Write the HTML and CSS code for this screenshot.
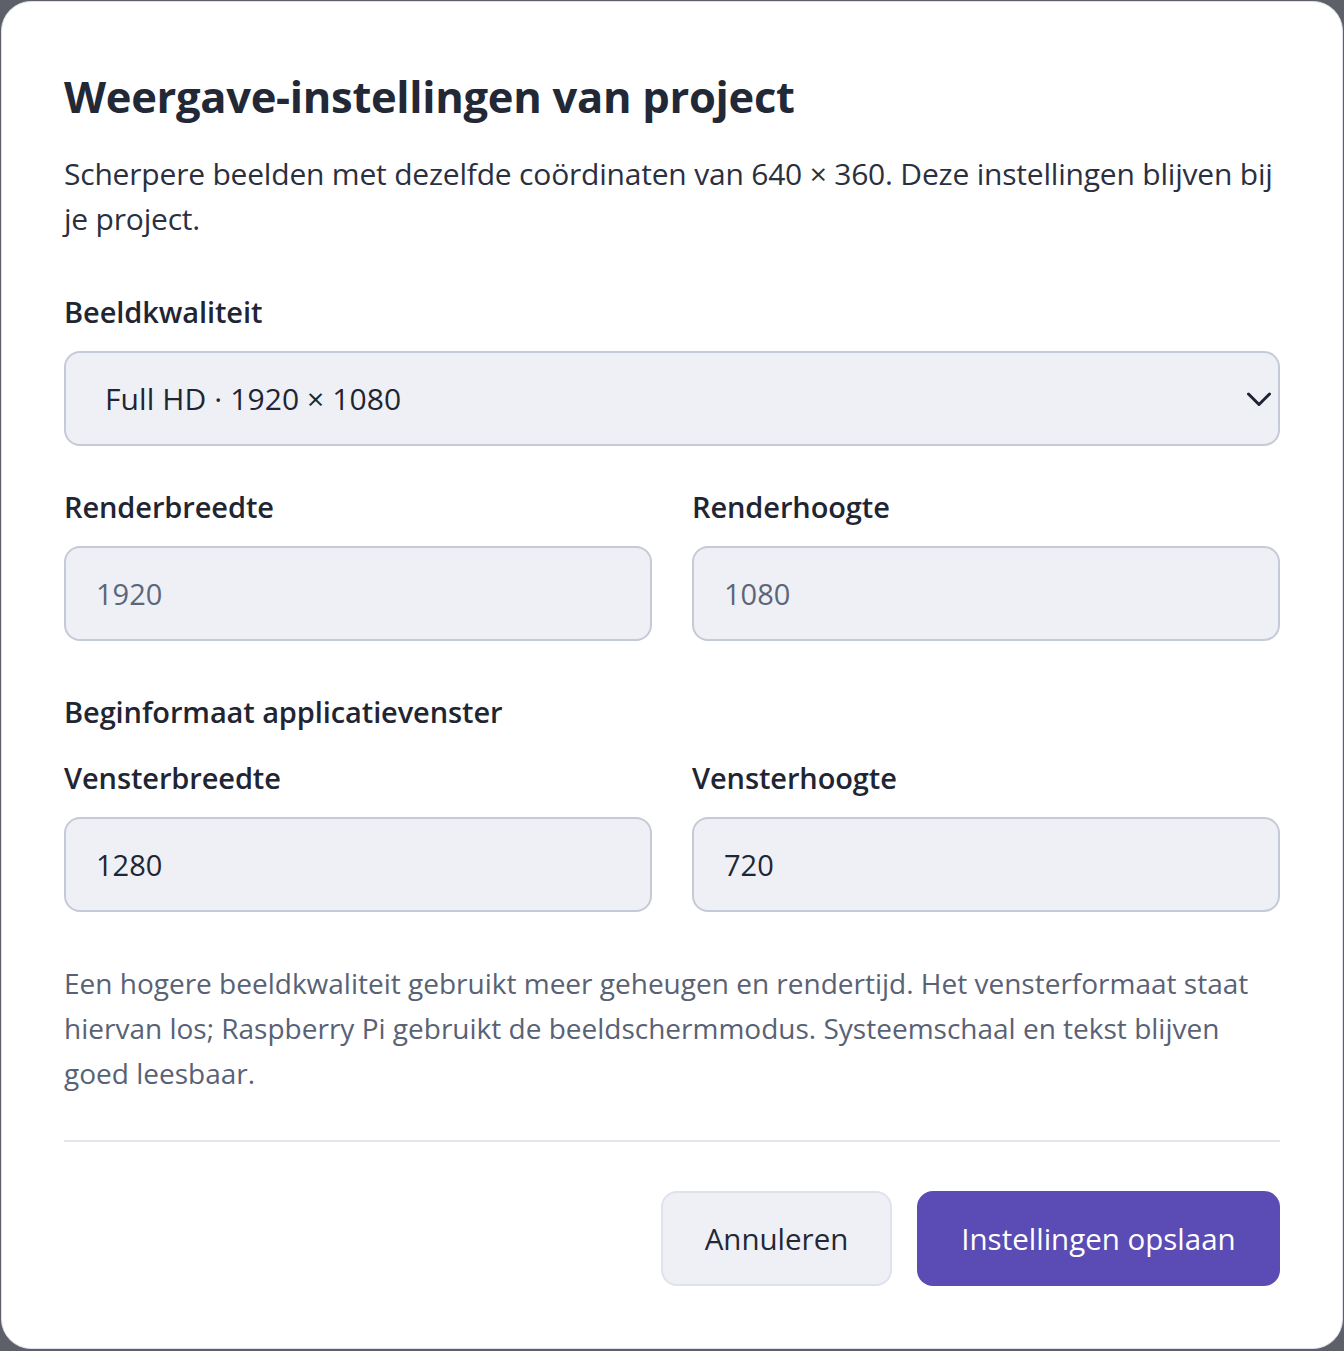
FILE: index.html
```html
<!DOCTYPE html>
<html lang="nl">
<head>
<meta charset="utf-8">
<title>Weergave-instellingen van project</title>
<link rel="stylesheet" href="styles.css">
</head>
<body>
<div class="modal">
  <h1 class="title">Weergave-instellingen van project</h1>
  <p class="desc">Scherpere beelden met dezelfde coördinaten van 640 × 360. Deze instellingen blijven bij je project.</p>

  <label class="label label-first">Beeldkwaliteit</label>
  <div class="select">
    <span class="select-value">Full HD · 1920 × 1080</span>
    <svg class="chevron" width="24" height="24" viewBox="0 0 24 24"><path d="M1.5 7L12 17.5 22.5 7" fill="none" stroke="#1f2433" stroke-width="3" stroke-linecap="round" stroke-linejoin="round"/></svg>
  </div>

  <div class="row row-render">
    <div class="field">
      <label class="label">Renderbreedte</label>
      <div class="input placeholder">1920</div>
    </div>
    <div class="field">
      <label class="label">Renderhoogte</label>
      <div class="input placeholder">1080</div>
    </div>
  </div>

  <div class="section">Beginformaat applicatievenster</div>
  <div class="row">
    <div class="field">
      <label class="label">Vensterbreedte</label>
      <div class="input">1280</div>
    </div>
    <div class="field">
      <label class="label">Vensterhoogte</label>
      <div class="input">720</div>
    </div>
  </div>

  <p class="help">Een hogere beeldkwaliteit gebruikt meer geheugen en rendertijd. Het vensterformaat staat hiervan los; Raspberry Pi gebruikt de beeldschermmodus. Systeemschaal en tekst blijven goed leesbaar.</p>

  <div class="divider"></div>

  <div class="actions">
    <button class="btn btn-cancel">Annuleren</button>
    <button class="btn btn-primary">Instellingen opslaan</button>
  </div>
</div>
</body>
</html>
```

FILE: styles.css
```css
* { box-sizing: border-box; }
html, body { margin: 0; padding: 0; }
body {
  background: #5e6069;
  width: 1344px;
  height: 1351px;
  overflow: hidden;
  font-family: "Open Sans", "Noto Sans", "Liberation Sans", sans-serif;
  color: #212736;
}
.modal {
  margin: 1px 0 0 1px;
  width: 1342px;
  height: 1348px;
  background: #ffffff;
  border: 1px solid #dcdfe7;
  border-radius: 30px;
  padding: 67px 62px 0 62px;
}
.title {
  margin: 0;
  font-size: 43.5px;
  line-height: 56px;
  font-weight: 700;
  color: #222836;
  letter-spacing: -0.3px;
}
.desc {
  margin: 26px 0 0 0;
  font-size: 30px;
  line-height: 45px;
  color: #2a3040;
  letter-spacing: -0.2px;
}
.label {
  display: block;
  font-size: 29px;
  line-height: 40px;
  font-weight: 600;
  color: #1f2533;
  letter-spacing: -0.1px;
  margin-bottom: 19px;
}
.label-first { margin-top: 51px; }
.select {
  height: 95px;
  border: 2px solid #c5cad7;
  border-radius: 16px;
  background: #eef0f5;
  display: flex;
  align-items: center;
  justify-content: space-between;
  padding: 0 7px 0 39px;
}
.select-value {
  font-size: 30px;
  color: #1f2533;
  letter-spacing: 0.1px;
}
.chevron { width: 24px; height: 24px; }
.row {
  display: grid;
  grid-template-columns: 1fr 1fr;
  gap: 40px;
}
.row-render { margin-top: 41px; }
.input {
  height: 95px;
  border: 2px solid #c5cad7;
  border-radius: 16px;
  background: #eef0f5;
  display: flex;
  align-items: center;
  padding: 0 30px;
  font-size: 29px;
  color: #1f2533;
}
.input.placeholder { color: #5d6679; }
.section {
  margin-top: 51px;
  margin-bottom: 26px;
  font-size: 29px;
  line-height: 40px;
  font-weight: 600;
  color: #1f2533;
  letter-spacing: -0.1px;
}
.help {
  margin: 49px 0 0 0;
  font-size: 28px;
  line-height: 45px;
  color: #596275;
}
.divider {
  margin-top: 44px;
  height: 2px;
  background: #e3e6ed;
}
.actions {
  margin-top: 49px;
  display: flex;
  justify-content: flex-end;
  gap: 25px;
}
.btn {
  height: 95px;
  border-radius: 16px;
  font-family: inherit;
  font-size: 29.5px;
  cursor: pointer;
}
.btn-cancel {
  width: 231px;
  background: #eef0f5;
  border: 2px solid #dfe2ea;
  color: #232836;
}
.btn-primary {
  width: 363px;
  background: #5b4bb5;
  border: none;
  color: #ffffff;
}
```
